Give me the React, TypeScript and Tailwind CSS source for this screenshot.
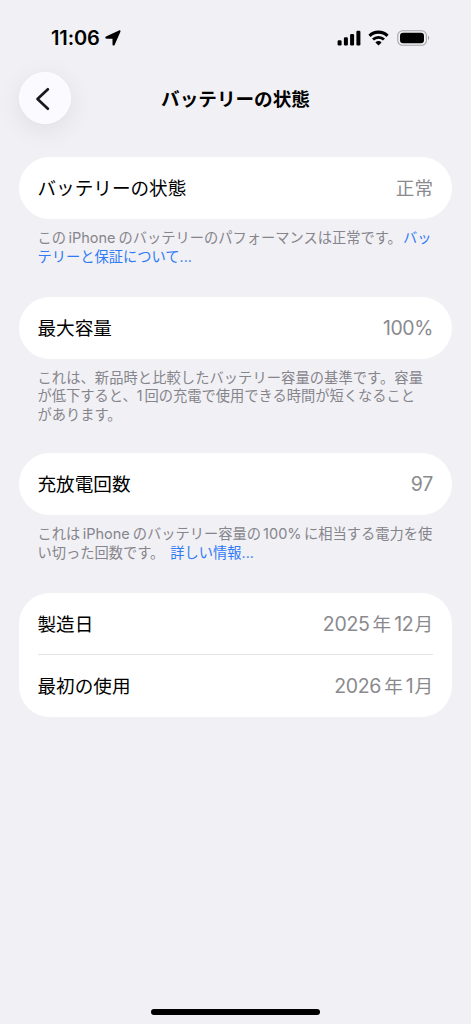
import type { ReactNode } from 'react';

const StatusBar = () => (
  <div className="flex h-[72px] items-start justify-between pt-[26px] pr-[41px] pl-[51px]">
    <div className="flex h-6 items-center gap-[5px]">
      <span className="text-[20px] leading-6 font-semibold tracking-[-0.1px]">11:06</span>
      <svg width="16" height="16" viewBox="0 0 16 16">
        <path d="M1 6.4 14 .4c1-.4 1.8.4 1.4 1.4L9.6 14.9c-.5 1.1-2.1.8-2.1-.4V8.7H1.6C.2 8.7-.2 7 1 6.4Z" />
      </svg>
    </div>
    <div className="flex h-6 items-center">
      <svg width="24" height="16" viewBox="0 0 24 16">
        <rect x="0.6" y="10.2" width="4" height="5.2" rx="1.2" />
        <rect x="6.9" y="7.2" width="4" height="8.2" rx="1.2" />
        <rect x="13.1" y="4" width="4" height="11.4" rx="1.2" />
        <rect x="19.4" y="0.7" width="4" height="14.7" rx="1.2" />
      </svg>
      <svg className="ml-[7px]" width="21" height="16" viewBox="0 0 21 16" fill="none" stroke="currentColor">
        <path d="M1.5 5.8a12.8 12.8 0 0 1 18 0" strokeWidth="3.1" />
        <path d="M5 9.6a7.8 7.8 0 0 1 11 0" strokeWidth="2.8" />
        <path d="M10.5 15.4 7.4 12.4a4.4 4.4 0 0 1 6.2 0Z" fill="currentColor" stroke="none" />
      </svg>
      <svg className="ml-2" width="33" height="16" viewBox="0 0 33 16">
        <rect x="0.8" y="0.8" width="28.6" height="14.4" rx="4.8" fill="none" stroke="#a5a4a8" strokeWidth="1.1" />
        <rect x="3" y="2.8" width="24" height="10.4" rx="3.2" />
        <path d="M31 5.8c1.5.5 1.5 3.9 0 4.4Z" fill="#a5a4a8" />
      </svg>
    </div>
  </div>
);

const Header = () => (
  <div className="grid h-[52px] grid-cols-[52px_1fr_52px] items-center px-[19px]">
    <button
      aria-label="戻る"
      className="flex size-[52px] items-center justify-center rounded-full border border-white bg-[#fafaff] shadow-[0_6px_26px_rgba(0,0,0,0.08)]"
    >
      <svg className="mt-px mr-[5px]" width="15" height="24" viewBox="0 0 15 24" fill="none" stroke="#1a1a1e" strokeWidth="2.7" strokeLinecap="round" strokeLinejoin="round">
        <path d="M12.9 2.3 2.5 12l10.4 9.7" />
      </svg>
    </button>
    <h1 className="pt-[2px] text-center text-[18.6px] leading-7 font-bold">バッテリーの状態</h1>
  </div>
);

const Row = ({ label, children }: { label: string; children: ReactNode }) => (
  <div className="flex h-[62px] items-center justify-between text-[18.6px] leading-7 whitespace-nowrap">
    <span>{label}</span>
    <span className="text-[#8a8a8e]">{children}</span>
  </div>
);

const Card = ({ children }: { children: ReactNode }) => (
  <div className="mx-[19px] rounded-[31px] bg-white pr-[19px] pl-[18.5px]">{children}</div>
);

const Note = ({ children, className = '' }: { children: ReactNode; className?: string }) => (
  <p className={`pl-[37.5px] text-[14.25px] leading-[18.6px] whitespace-nowrap text-[#85858b] ${className}`}>
    {children}
  </p>
);

const Link = ({ children }: { children: ReactNode }) => (
  <a href="#" className="text-[#2f7bf6]">{children}</a>
);

export default function App() {
  return (
    <div className="flex h-[1024px] w-[471px] flex-col overflow-hidden bg-[#f1f0f5] font-['Inter','Noto_Sans_CJK_JP',sans-serif] text-black">
      <StatusBar />
      <Header />

      <main className="mt-[33px] flex-1">
        <Card>
          <Row label="バッテリーの状態">正常</Row>
        </Card>
        <Note className="h-[78px] pt-[10px]">
          この<span className="mr-[3px] ml-[2.5px] text-[14.5px] leading-none">iPhone</span>のバッテリーのパフォーマンスは正常です。<Link><span className="ml-px">バッ</span></Link>
          <br />
          <Link>テリーと保証について...</Link>
        </Note>

        <Card>
          <Row label="最大容量"><span className="text-[19.5px] tracking-[-0.4px]">100%</span></Row>
        </Card>
        <Note className="h-[94px] pt-[9.5px]">
          <span className="tracking-[0.08px]">これは、新品時と比較したバッテリー容量の基準です。容量</span>
          <br />
          が低下すると、<span className="mr-[2px]">1</span>回の充電で使用できる時間が短くなること
          <br />
          があります。
        </Note>

        <Card>
          <Row label="充放電回数"><span className="text-[19.5px] tracking-[-0.3px]">97</span></Row>
        </Card>
        <Note className="h-[78px] pt-[10px]">
          これは<span className="mr-[3px] ml-[2.5px] text-[14.5px] leading-none">iPhone</span>のバッテリー容量の<span className="mr-[2.5px] ml-[2px] text-[14.5px] leading-none">100%</span>に相当する電力を使
          <br />
          い切った回数です。<Link><span className="ml-1.5">詳しい情報</span>...</Link>
        </Note>

        <Card>
          <Row label="製造日">
            <span className="mr-[3px] text-[19.5px] tracking-[-0.3px]">2025</span>年<span className="mr-px ml-[3px] text-[19.5px] tracking-[-0.3px]">12</span>月
          </Row>
          <div className="-mt-px h-px bg-[#e4e4e6]" />
          <Row label="最初の使用">
            <span className="mr-[3px] text-[19.5px] tracking-[-0.3px]">2026</span>年<span className="mr-px ml-[3px] text-[19.5px] tracking-[-0.3px]">1</span>月
          </Row>
        </Card>
      </main>

      <div className="mx-auto mb-[9px] h-1.5 w-[169px] rounded-full bg-black" />
    </div>
  );
}
